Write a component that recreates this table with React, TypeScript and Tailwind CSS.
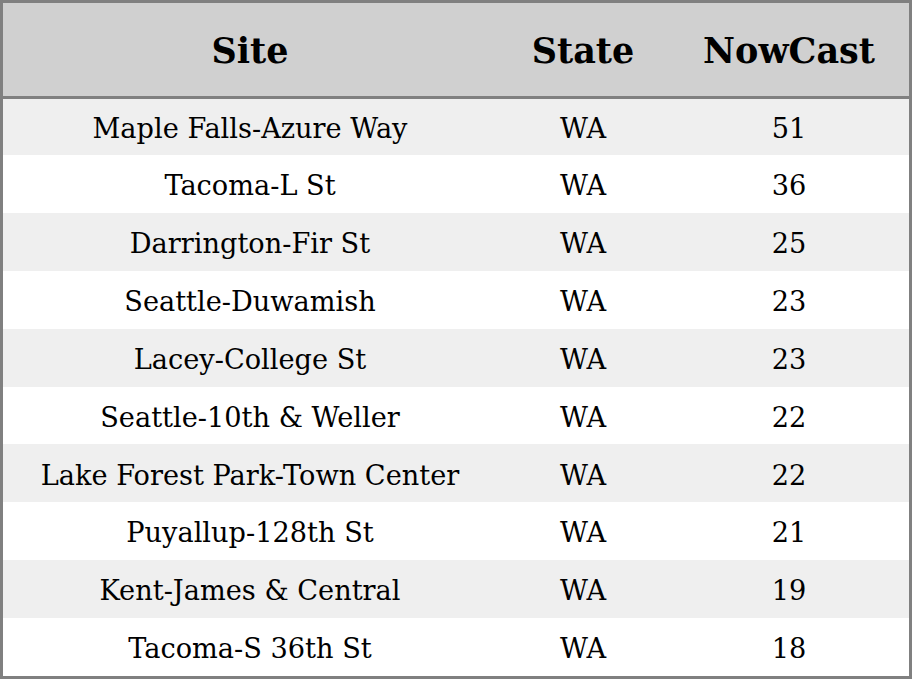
const rows: [string, string, number][] = [
  ['Maple Falls-Azure Way', 'WA', 51],
  ['Tacoma-L St', 'WA', 36],
  ['Darrington-Fir St', 'WA', 25],
  ['Seattle-Duwamish', 'WA', 23],
  ['Lacey-College St', 'WA', 23],
  ['Seattle-10th & Weller', 'WA', 22],
  ['Lake Forest Park-Town Center', 'WA', 22],
  ['Puyallup-128th St', 'WA', 21],
  ['Kent-James & Central', 'WA', 19],
  ['Tacoma-S 36th St', 'WA', 18],
];

const App = () => {
  return (
    <div
      className="h-[679px] w-[912px] flex flex-col border-[3px] border-[#808080] bg-white text-black"
      style={{ fontFamily: '"DejaVu Serif", serif' }}
    >
      <div className="h-[89px] pt-[4px] shrink-0 grid grid-cols-[494px_172px_1fr] items-center bg-[#d0d0d0] border-b-[3px] border-[#808080] box-content text-[35px] font-bold">
        <div className="text-center">Site</div>
        <div className="text-center">State</div>
        <div className="text-center">NowCast</div>
      </div>
      {rows.map(([site, state, value], i) => (
        <div
          key={site}
          className={`grid grid-cols-[494px_172px_1fr] items-center pt-[5px] text-[27.2px] ${i === 0 ? 'h-[56px] shrink-0' : 'flex-1'} ${i % 2 === 0 ? 'bg-[#efefef]' : 'bg-white'}`}
        >
          <div className="text-center">{site}</div>
          <div className="text-center">{state}</div>
          <div className="text-center">{value}</div>
        </div>
      ))}
    </div>
  );
};

export default App;
